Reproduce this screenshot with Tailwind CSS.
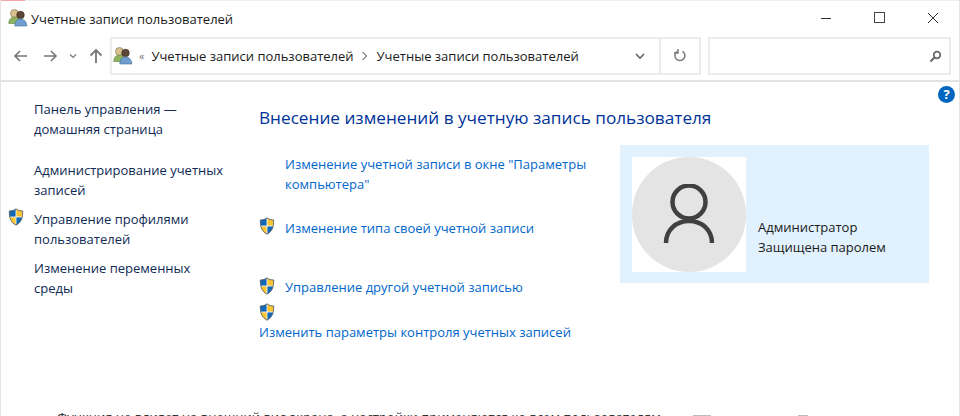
<!DOCTYPE html>
<html><head><meta charset="utf-8"><script src="https://cdn.jsdelivr.net/npm/@tailwindcss/browser@4"></script></head>
<body class="bg-white">
<div class="relative w-[960px] h-[416px] overflow-hidden bg-white border-x border-[#e4e4e4] font-['Open_Sans','Noto_Sans',sans-serif] text-[13px] leading-5 text-[#1a1a1a]">
  <div class="absolute left-0 top-0 w-[24px] h-[1px] bg-[#f4a6a6]"></div>
  <div class="absolute left-[24px] right-0 top-0 h-[1px] bg-[#efefef]"></div>
  <div class="absolute left-[-1px] top-0 w-[1px] h-[25px] bg-[#f4a6a6]"></div>
  <div class="absolute right-[-1px] top-[30px] w-[1px] h-[8px] bg-[#999]"></div>
  <div class="absolute right-[-1px] top-[377px] w-[1px] h-[8px] bg-[#999]"></div>
  <header class="flex items-center h-[37px] pl-[7px] pt-[1px]">
    <svg class="-mt-[2px]" width="20" height="20" viewBox="0 0 20 20"><use href="#users"/></svg>
    <span class="ml-[3px] whitespace-nowrap">Учетные записи пользователей</span>
    <div class="ml-auto -mt-[3px] flex items-center text-[#333]">
      <svg class="mr-[42px]" width="12" height="12" viewBox="0 0 12 12"><path d="M1 6.500h10" stroke="#333"/></svg>
      <svg class="mr-[42px]" width="11" height="11" viewBox="0 0 11 11"><rect x=".5" y=".5" width="10" height="10" fill="none" stroke="#444"/></svg>
      <svg class="mr-[20px]" width="12" height="12" viewBox="0 0 12 12"><path d="M1 1l10 10M11 1L1 11" stroke="#333"/></svg>
    </div>
  </header>
  <nav class="flex items-center h-[45px] border-b-2 border-[#e2e2e2] pb-[5px]">
    <div class="flex items-center w-[109px] pl-[12px]">
      <svg width="16" height="16" viewBox="0 0 16 16" fill="none" stroke="#777" stroke-width="1.600"><path d="M14 8H2M7 3L2 8l5 5"/></svg>
      <svg class="ml-[13px]" width="16" height="16" viewBox="0 0 16 16" fill="none" stroke="#777" stroke-width="1.600"><path d="M2 8h12M9 3l5 5-5 5"/></svg>
      <svg class="ml-[11px]" width="8" height="8" viewBox="0 0 8 8" fill="none" stroke="#777" stroke-width="1.200"><path d="M1 2.500l3 3 3-3"/></svg>
      <svg class="ml-[11px]" width="16" height="16" viewBox="0 0 16 16" fill="none" stroke="#777" stroke-width="1.800"><path d="M8 15V2M2.500 7.500L8 2l5.500 5.500"/></svg>
    </div>
    <div class="flex items-center h-[38px] w-[591px] border-2 border-[#ececec]">
      <svg class="ml-[1px]" width="20" height="20" viewBox="0 0 20 20"><use href="#users"/></svg>
      <span class="ml-[6px] text-[#777] text-[11px]">«</span>
      <span class="ml-[7px] whitespace-nowrap">Учетные записи пользователей</span>
      <svg class="ml-[7px] mr-[9px]" width="7" height="10" viewBox="0 0 7 10" fill="none" stroke="#333"><path d="M1.500 1l4 4-4 4"/></svg>
      <span class="whitespace-nowrap">Учетные записи пользователей</span>
      <div class="ml-auto flex items-center h-full">
        <svg class="mr-[13px]" width="12" height="12" viewBox="0 0 12 12" fill="none" stroke="#666" stroke-width="1.600"><path d="M2 4l4 4 4-4"/></svg>
        <div class="flex items-center justify-center w-[40px] h-full border-l-2 border-[#ececec]">
          <svg width="14" height="14" viewBox="0 0 14 14" fill="none" stroke="#777" stroke-width="1.500"><path d="M9.500 2.300A5 5 0 1 1 4 2.500"/><path d="M6 0v4H2" transform="translate(-1 0)"/></svg>
        </div>
      </div>
    </div>
    <div class="flex items-center justify-end h-[38px] w-[243px] ml-[7px] border-2 border-[#ececec] pr-[7px]">
      <svg width="13" height="13" viewBox="0 0 13 13" fill="none" stroke="#666"><circle cx="8" cy="5" r="3.300" stroke-width="1.700"/><path d="M5.500 7.500L1.500 11.500" stroke-width="2"/></svg>
    </div>
  </nav>
  <main class="relative flex h-[332px]">
    <aside class="w-[258px] pl-[33px] pt-[17px] flex flex-col text-[#0f2a55]">
      <p>Панель управления —<br>домашняя страница</p>
      <p class="mt-[21px]">Администрирование учетных<br>записей</p>
      <div class="relative mt-[9px]">
        <svg class="absolute left-[-26px] top-[-1px]" width="16" height="18"><use href="#shield"/></svg>
        <p>Управление профилями<br>пользователей</p>
      </div>
      <p class="mt-[9px]">Изменение переменных<br>среды</p>
    </aside>
    <section class="w-[360px] pt-[26px]">
      <h1 class="text-[17.200px] leading-[20px] text-[#003399] whitespace-nowrap">Внесение изменений в учетную запись пользователя</h1>
      <div class="mt-[26px] text-[#0066cc]">
        <p class="pl-[26px]">Изменение учетной записи в окне "Параметры<br>компьютера"</p>
        <div class="mt-[24px] flex gap-[10px] h-[20px]"><svg class="w-[16px] h-[18px] -mt-[1px]"><use href="#shield"/></svg><p>Изменение типа своей учетной записи</p></div>
        <div class="mt-[39px] flex gap-[10px] h-[20px]"><svg class="w-[16px] h-[18px]"><use href="#shield"/></svg><p>Управление другой учетной записью</p></div>
        <svg class="mt-[6px] w-[16px] h-[18px]"><use href="#shield"/></svg>
        <p class="mt-[1px] whitespace-nowrap">Изменить параметры контроля учетных записей</p>
      </div>
    </section>
    <section class="mt-[63px] ml-[1px] w-[309px] h-[138px] bg-[#e1f1fd] pl-[12px] pt-[12px] flex">
      <div class="w-[114px] h-[115px] bg-white">
        <div class="relative w-[114px] h-[115px] rounded-full bg-[#e4e4e4]">
          <svg class="absolute left-[30px] top-[27px]" width="54" height="60" viewBox="0 0 54 60" fill="none" stroke="#404040" stroke-width="4.500"><circle cx="27" cy="18" r="16.500"/><path d="M4 59C4 46 14 37 27 37S50 46 50 59"/></svg>
        </div>
      </div>
      <div class="ml-[12px] mt-[60px] text-[#1a1a1a] whitespace-nowrap"><p>Администратор</p><p>Защищена паролем</p></div>
    </section>
    <div class="absolute left-[937px] top-[4px] w-[17px] h-[17px] rounded-full bg-[#0066c0] text-white text-[13px] leading-[17px] font-bold text-center">?</div>
  </main>
  <div class="absolute left-[56px] top-[407px] whitespace-nowrap leading-5 text-[#333]">Функция не влияет на внешний вид экрана, а настройки применяются ко всем пользователям</div>
  <div class="absolute left-[692px] bottom-0 w-[18px] h-[1px] bg-[#bbb]"></div>
  <div class="absolute left-[797px] bottom-0 w-[10px] h-[1px] bg-[#bbb]"></div>
  <svg width="0" height="0" class="absolute">
    <defs>
      <g id="users">
        <circle cx="6.500" cy="5.500" r="4" fill="#d8c08f" stroke="#7d6f4c" stroke-width=".6"/>
        <path d="M.8 15.500c0-4 2-6.300 5.700-6.300s5.500 2.500 5.500 6.300z" fill="#8db35c" stroke="#5c7d3c" stroke-width=".6"/>
        <circle cx="12.500" cy="7" r="3.800" fill="#5b4635" stroke="#3a2c20" stroke-width=".6"/>
        <path d="M6.800 18c0-4.300 2.200-7 5.700-7s6.300 2.700 6.300 7z" fill="#6f9fcf" stroke="#41709f" stroke-width=".6"/>
      </g>
      <g id="shield">
        <clipPath id="sc"><path d="M8 .8C6 2.500 3.500 3 1.300 3c0 6 .8 11 6.700 14.200C13.900 14 14.700 9 14.700 3 12.500 3 10 2.500 8 .8z"/></clipPath>
        <g clip-path="url(#sc)">
          <rect width="8" height="9" fill="#1468b8"/><rect x="8" width="8" height="9" fill="#f9c432"/>
          <rect y="9" width="8" height="9" fill="#fbc52f"/><rect x="8" y="9" width="8" height="9" fill="#1468b8"/>
          <path d="M8 0v18M0 9h16" stroke="#fff" stroke-width=".8"/>
        </g>
        <path d="M8 .8C6 2.500 3.500 3 1.300 3c0 6 .8 11 6.700 14.200C13.900 14 14.700 9 14.700 3 12.500 3 10 2.500 8 .8z" fill="none" stroke="#56606a" stroke-width=".9"/>
      </g>
    </defs>
  </svg>
</div>
</body></html>
